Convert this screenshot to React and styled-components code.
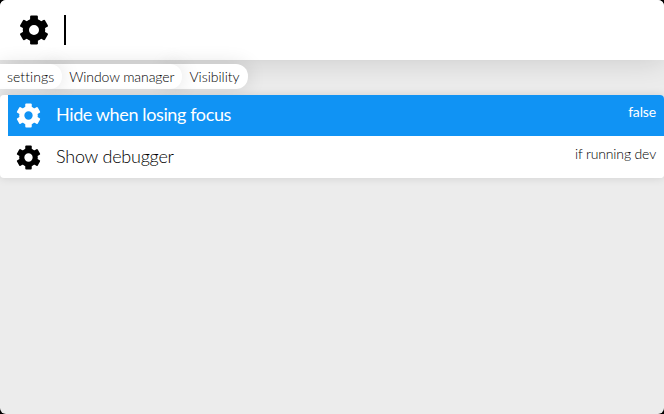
import React from 'react';
import styled, { createGlobalStyle } from 'styled-components';

const GlobalStyle = createGlobalStyle`
  * { box-sizing: border-box; }
  body {
    margin: 0;
    background: #000;
    font-family: Lato, "Open Sans", sans-serif;
    font-weight: 300;
    font-variant-ligatures: none;
    color: #000;
  }
`;

const Window = styled.main`
  height: 414px;
  background: #ececec;
  border-radius: 6px;
  overflow: hidden;
`;

const SearchBar = styled.header`
  display: flex;
  align-items: center;
  height: 60px;
  padding-left: 19px;
  gap: 15px;
  background: #fff;
  box-shadow: 0 0 30px rgba(0, 0, 0, 0.16);
`;

const GearSvg = styled.svg`
  display: block;
  flex: none;
  width: ${(p) => p.$size}px;
  height: ${(p) => p.$size}px;
  fill: none;
  stroke: currentColor;
`;

const Caret = styled.span`
  width: 2px;
  height: 30px;
  background: #000;
`;

const Breadcrumbs = styled.nav`
  display: flex;
  height: 25px;
  margin-top: 4px;
  position: relative;
`;

const Crumb = styled.span`
  position: relative;
  z-index: ${(p) => p.$level};
  height: 25px;
  margin-left: ${(p) => (p.$first ? 0 : -15)}px;
  padding: 0 8px 0 ${(p) => (p.$first ? 7 : 22)}px;
  border-radius: 0 12px 12px 0;
  background: #fff;
  box-shadow: 0 0 20px rgba(0, 0, 0, 0.12);
  font-size: 14px;
  letter-spacing: ${(p) => p.$tracking}px;
  line-height: 26px;
  white-space: nowrap;
`;

const Results = styled.ul`
  position: relative;
  z-index: 4;
  height: 83px;
  margin: 6px 0 0;
  padding: 0 0 0 8px;
  list-style: none;
  background: #fff;
  border-radius: 4px;
  box-shadow: 0 0 10px rgba(0, 0, 0, 0.12);
  overflow: hidden;
`;

const Title = styled.span`
  flex: 1;
  margin-left: 15px;
  padding-bottom: 2px;
  font-size: 18px;
  line-height: 24px;
`;

const Value = styled.span`
  align-self: flex-start;
  font-size: 14px;
  letter-spacing: -0.15px;
  line-height: 17px;
`;

const Result = styled.li`
  display: flex;
  align-items: center;
  height: ${(p) => (p.$active ? 41 : 42)}px;
  padding: 0 8px;
  color: ${(p) => (p.$active ? '#fff' : '#000')};
  background: ${(p) => (p.$active ? '#1093f4' : '#fff')};
  font-weight: ${(p) => (p.$active ? 400 : 300)};

  ${Title} {
    letter-spacing: ${(p) => (p.$active ? -0.38 : -0.22)}px;
    padding-bottom: ${(p) => (p.$active ? 3 : 2)}px;
  }

  ${Value} {
    padding-top: ${(p) => (p.$active ? 8 : 9)}px;
  }
`;

function Gear({ size }) {
  return (
    <GearSvg viewBox="0 0 30 30" $size={size} aria-hidden="true">
      <circle cx="15" cy="15" r="8.1" strokeWidth="6.2" />
      {[0, 60, 120, 180, 240, 300].map((angle) => (
        <rect
          key={angle}
          x="11.1"
          y="0.6"
          width="7.8"
          height="6"
          rx="1.2"
          fill="currentColor"
          stroke="none"
          transform={`rotate(${angle} 15 15)`}
        />
      ))}
    </GearSvg>
  );
}

export default function App() {
  return (
    <>
      <GlobalStyle />
      <Window>
        <SearchBar>
          <Gear size={30} />
          <Caret />
        </SearchBar>
        <Breadcrumbs>
          <Crumb $first $level={3} $tracking={0.05}>settings</Crumb>
          <Crumb $level={2} $tracking={-0.09}>Window manager</Crumb>
          <Crumb $level={1} $tracking={0}>Visibility</Crumb>
        </Breadcrumbs>
        <Results>
          <Result $active>
            <Gear size={25} />
            <Title>Hide when losing focus</Title>
            <Value>false</Value>
          </Result>
          <Result>
            <Gear size={25} />
            <Title>Show debugger</Title>
            <Value>if running dev</Value>
          </Result>
        </Results>
      </Window>
    </>
  );
}
